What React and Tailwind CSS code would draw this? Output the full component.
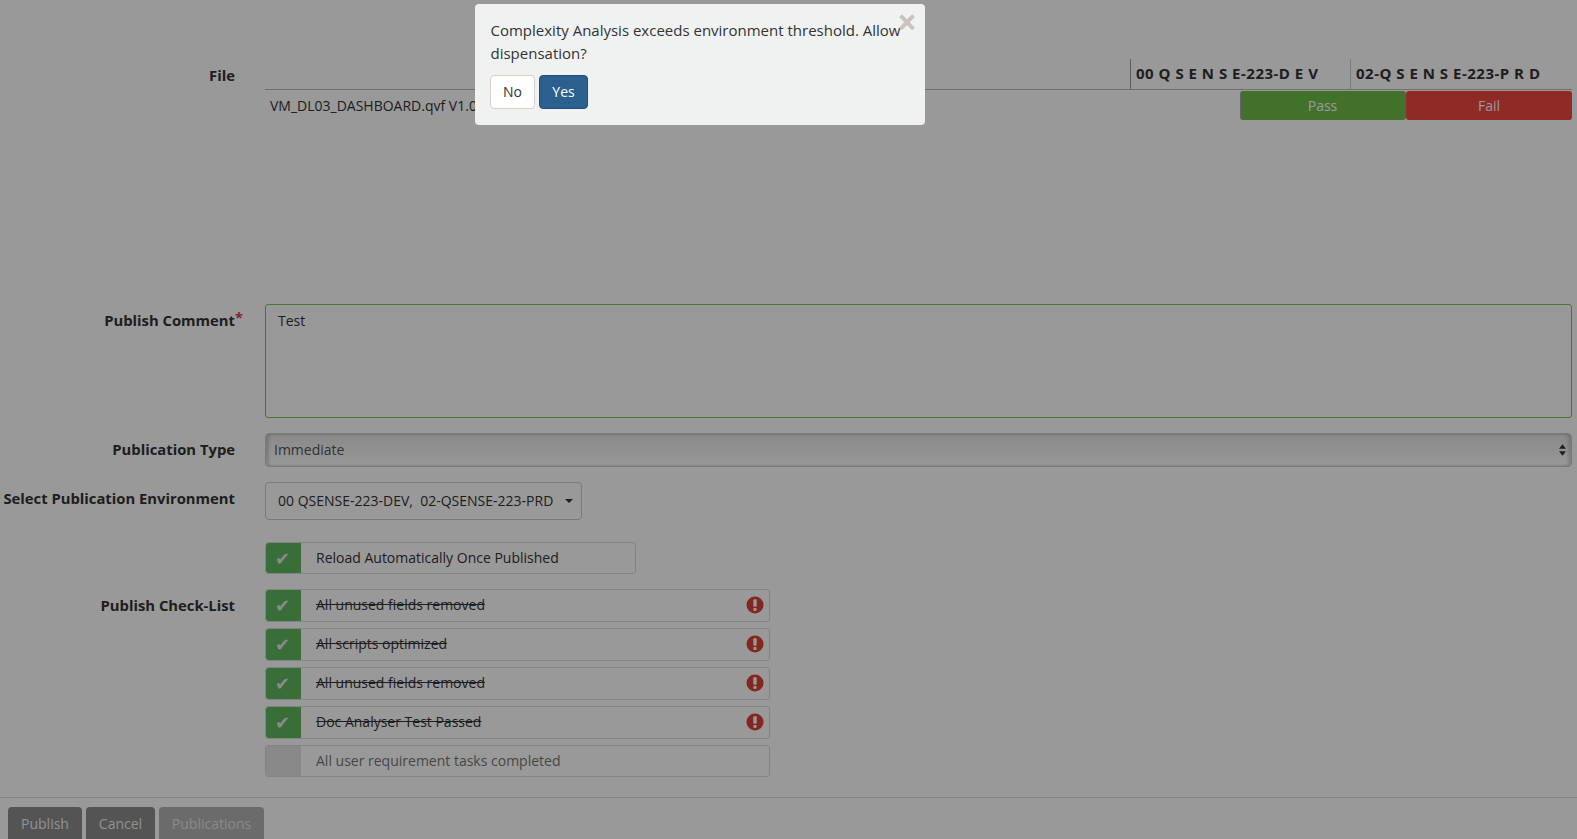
import React from "react";

const checklist = [
  { label: "All unused fields removed", done: true },
  { label: "All scripts optimized", done: true },
  { label: "All unused fields removed", done: true },
  { label: "Doc Analyser Test Passed", done: true },
  { label: "All user requirement tasks completed", done: false },
];

function AlertIcon() {
  return (
    <svg width="18" height="18" viewBox="0 0 18 18" className="shrink-0">
      <circle cx="9" cy="9" r="8.5" fill="#dc4238" />
      <rect x="7.3" y="3.2" width="3.4" height="7.6" rx="1" fill="#fff" />
      <rect x="7.4" y="11.9" width="3.2" height="3" rx="0.8" fill="#fff" />
    </svg>
  );
}

function CheckRow({ label, done, alert, className }) {
  return (
    <div className={`flex items-stretch border border-[#ddd] rounded-[3px] ${className}`}>
      <div className={`w-[35px] shrink-0 flex items-center justify-center rounded-l-[3px] text-[#e8e8e8] text-[18px] pr-[3px] ${alert ? "pb-[2px]" : ""} ${done ? "bg-[#5fb760]" : "bg-[#e4e4e4]"}`}>
        {done ? "✔" : ""}
      </div>
      <div className={`flex-1 flex items-center pl-[15px] ${alert ? "line-through text-[#333] pb-[2px]" : done ? "text-[#333]" : "text-[#777]"}`}>
        {label}
      </div>
      {alert && (
        <div className="flex items-center pr-[5px] pb-[1px]">
          <AlertIcon />
        </div>
      )}
    </div>
  );
}

function Label({ children, className }) {
  return (
    <div className={`w-[235px] shrink-0 text-right font-bold text-[14.8px] text-[#333] ${className}`}>{children}</div>
  );
}

export default function App() {
  return (
    <div className="relative h-[839px] overflow-hidden bg-white text-[14px] leading-[20px] text-[#333] font-['Open_Sans',sans-serif]">
      {/* File table */}
      <div className="flex pt-[59px] pr-[5px]">
        <Label className="pt-[6px]">File</Label>
        <div className="flex-1 ml-[30px]">
          <div className="flex justify-end h-[31px] border-b border-[#bbb]">
            <div className="w-[220px] border-l border-[#999] pl-[5px] pt-[4px] font-bold text-[15px] tracking-[0.5px] whitespace-pre">00 Q S E N S E-223-D E V</div>
            <div className="w-[222px] border-l border-[#ccc] pl-[5px] pt-[4px] font-bold text-[15px] tracking-[0.5px] whitespace-pre">02-Q S E N S E-223-P R D</div>
          </div>
          <div className="flex justify-between h-[31px] pt-[1px]">
            <div className="pl-[5px] pt-[5px]">VM_DL03_DASHBOARD.qvf V1.0</div>
            <div className="flex">
              <div className="w-[166px] h-[29px] rounded-[3px] bg-[#6ebc4a] text-white flex items-center justify-center border-l border-[#aaa] pr-[2px]">Pass</div>
              <div className="w-[166px] h-[29px] rounded-[3px] bg-[#ee4640] text-white flex items-center justify-center">Fail</div>
            </div>
          </div>
        </div>
      </div>

      {/* Publish comment */}
      <div className="flex pt-[183px] pr-[5px]">
        <Label className="pt-[6px]">
          Publish Comment<span className="relative"><span className="absolute left-0 -top-[3px] text-[#e0403a]">*</span></span>
        </Label>
        <div className="flex-1 ml-[30px] h-[114px] border border-[#7fc15c] rounded-[3px] px-[12px] pt-[6px]">Test</div>
      </div>

      {/* Publication type */}
      <div className="flex pt-[15px] pr-[5px]">
        <Label className="pt-[6px]">Publication Type</Label>
        <div className="flex-1 ml-[30px] h-[34px] border border-[#ccc] rounded-[4px] pl-[8px] pr-[5px] flex items-center justify-between bg-gradient-to-b from-[#e4e4e4] to-white shadow-[inset_3px_0_3px_rgba(0,0,0,0.15),inset_-3px_0_3px_rgba(0,0,0,0.15)] text-[#555]">
          <span>Immediate</span>
          <svg width="7" height="12" viewBox="0 0 8 13">
            <path d="M4 0 L8 5 H0 Z M0 8 H8 L4 13 Z" fill="#333" />
          </svg>
        </div>
      </div>

      {/* Environment */}
      <div className="flex pt-[15px]">
        <Label className="pt-[6px] whitespace-nowrap">Select Publication Environment</Label>
        <div className="ml-[30px] w-[317px] h-[38px] border border-[#ccc] rounded-[4px] pl-[12px] pr-[8px] flex items-center justify-between whitespace-pre">
          <span>00 QSENSE-223-DEV,  02-QSENSE-223-PRD</span>
          <span className="w-0 h-0 border-x-[4px] border-x-transparent border-t-[4px] border-t-[#333]" />
        </div>
      </div>

      {/* Reload */}
      <div className="flex pt-[22px]">
        <div className="w-[235px] shrink-0" />
        <CheckRow label="Reload Automatically Once Published" done className="ml-[30px] w-[371px] h-[32px]" />
      </div>

      {/* Check list */}
      <div className="flex pt-[15px]">
        <Label className="pt-[6px]">Publish Check-List</Label>
        <div className="ml-[30px] w-[505px] flex flex-col gap-[6px]">
          {checklist.map((item, i) => (
            <CheckRow key={i} label={item.label} done={item.done} alert={item.done} className={item.done ? "h-[33px]" : "h-[32px]"} />
          ))}
        </div>
      </div>

      {/* Footer */}
      <div className="mt-[20px] border-t border-[#ddd] pt-[9px] pl-[8px] flex gap-[4px]">
        <div className="w-[74px] h-[40px] rounded-[4px] bg-[#8c8c8c] text-[#f0f0f0] text-center pt-[7px]">Publish</div>
        <div className="w-[69px] h-[40px] rounded-[4px] bg-[#8c8c8c] text-[#f0f0f0] text-center pt-[7px]">Cancel</div>
        <div className="w-[105px] h-[40px] rounded-[4px] bg-[#b3b3b3] text-[#e4e4e4] text-center pt-[7px]">Publications</div>
      </div>

      {/* Dialog overlay */}
      <div className="absolute inset-0 bg-black/40" />
      <div className="absolute left-[475px] top-[4px] w-[450px] h-[121px] rounded-[4px] bg-[#f0f2f2] pl-[15.5px] pr-[15px] pt-[15px]">
        <span className="absolute right-[8px] top-[0px] font-bold text-[35px] leading-[35px] text-[#c8c4bb]">×</span>
        <p className="text-[15px] leading-[23px] text-[#333]">Complexity Analysis exceeds environment threshold. Allow dispensation?</p>
        <div className="flex gap-[4px] mt-[10px] -ml-[0.5px]">
          <div className="w-[45px] h-[34px] flex items-center justify-center rounded-[4px] bg-white border border-[#d8d2c8] text-[#333]">No</div>
          <div className="w-[49px] h-[34px] flex items-center justify-center rounded-[4px] bg-[#2b5f8e] border border-[#234f78] text-white">Yes</div>
        </div>
      </div>
    </div>
  );
}
